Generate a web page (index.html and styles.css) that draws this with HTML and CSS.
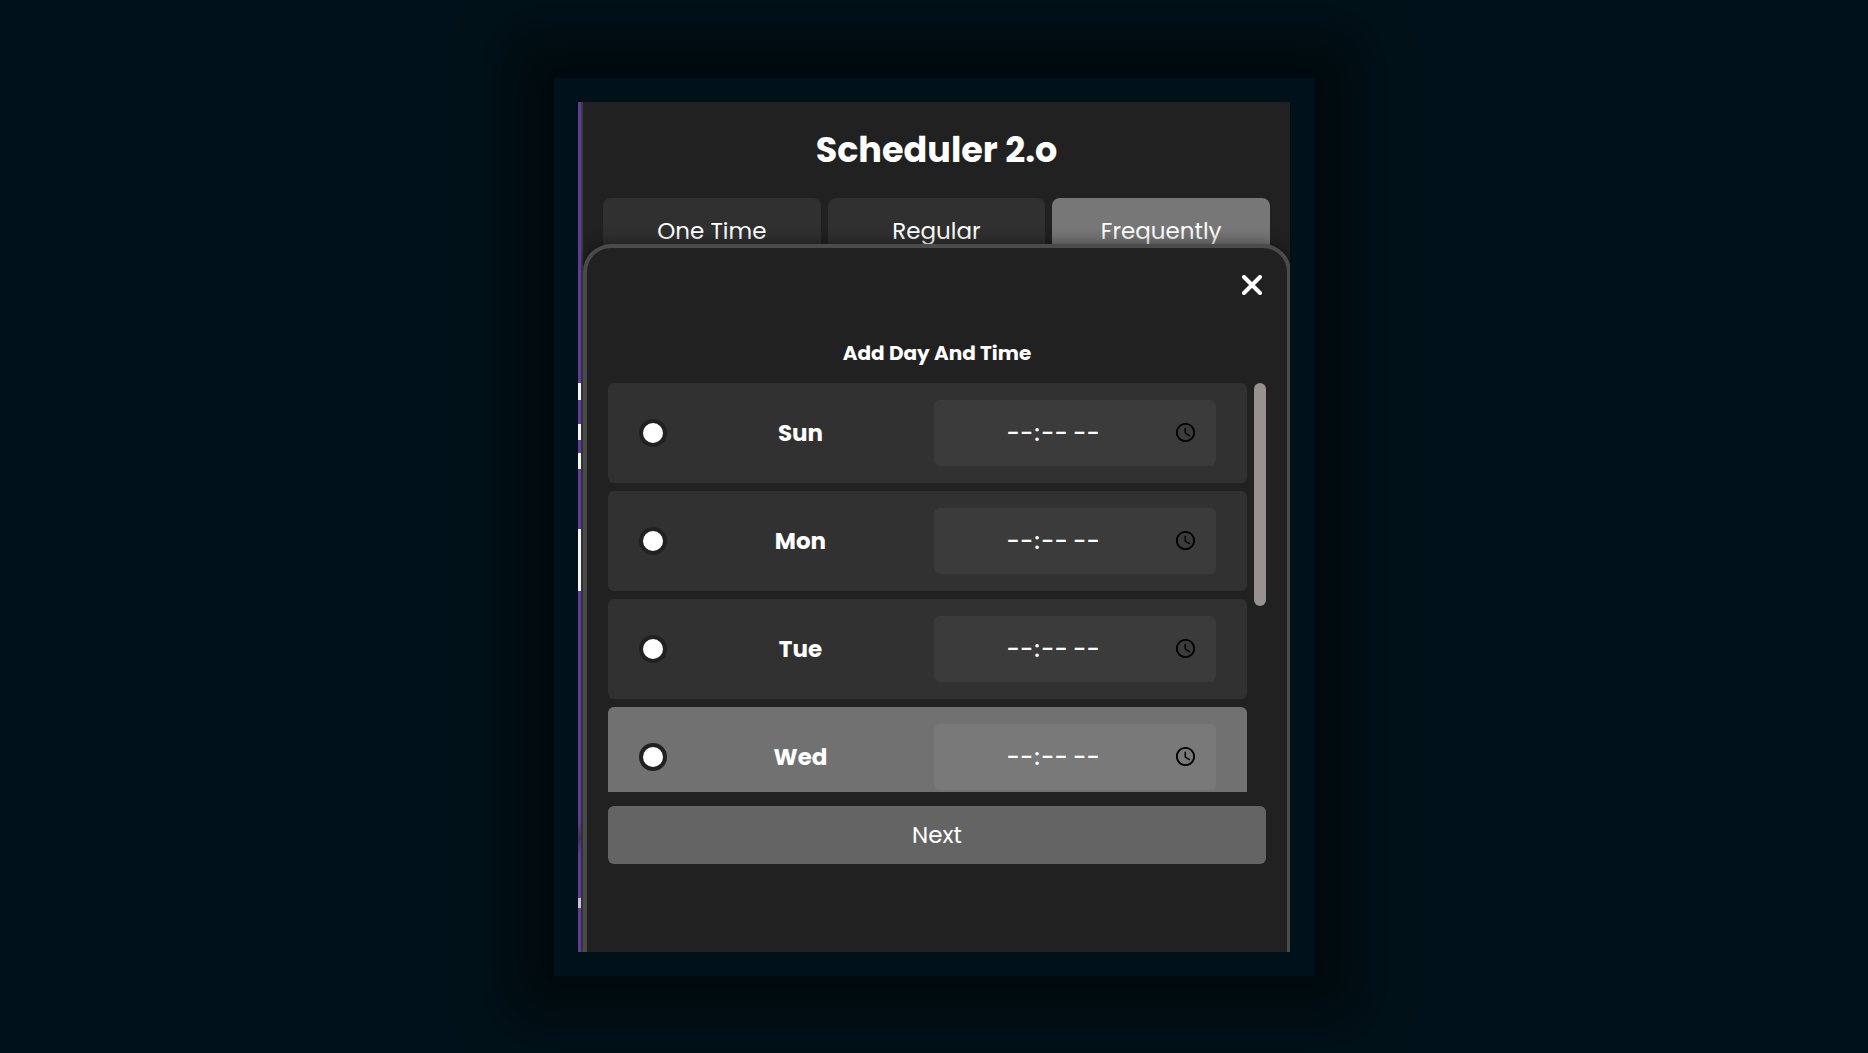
FILE: index.html
```
<!DOCTYPE html>
<html lang="en">
<head>
  <meta charset="UTF-8">
  <meta name="viewport" content="width=device-width, initial-scale=1.0">
  <title>Scheduler 2.o</title>
  <link rel="stylesheet" href="styles.css">
</head>
<body>
  <main class="frame">
    <div class="screen">
      <div class="strip"></div>
      <div class="app">
        <h1 class="app-title">Scheduler 2.o</h1>
        <nav class="tabs">
          <button type="button" class="tab">One Time</button>
          <button type="button" class="tab">Regular</button>
          <button type="button" class="tab active">Frequently</button>
        </nav>

        <!-- bottom sheet -->
        <form class="sheet">
          <button type="button" class="close-btn" aria-label="Close">
            <svg width="20" height="20" viewBox="0 0 20 20" fill="none" stroke="#fff" stroke-width="4" stroke-linecap="round">
              <path d="M2 2L18 18M18 2L2 18"/>
            </svg>
          </button>
          <h2 class="sheet-title">Add Day And Time</h2>
          <div class="days-wrap">
            <div class="days">
              <div class="day">
                <input type="radio" name="day" id="sun" class="day-radio">
                <label for="sun" class="day-name">Sun</label>
                <input type="time" class="day-time" aria-label="Sun time">
              </div>
              <div class="day">
                <input type="radio" name="day" id="mon" class="day-radio">
                <label for="mon" class="day-name">Mon</label>
                <input type="time" class="day-time" aria-label="Mon time">
              </div>
              <div class="day">
                <input type="radio" name="day" id="tue" class="day-radio">
                <label for="tue" class="day-name">Tue</label>
                <input type="time" class="day-time" aria-label="Tue time">
              </div>
              <div class="day highlight">
                <input type="radio" name="day" id="wed" class="day-radio">
                <label for="wed" class="day-name">Wed</label>
                <input type="time" class="day-time" aria-label="Wed time">
              </div>
            </div>
            <div class="scroll-thumb"></div>
          </div>
          <button type="button" class="next-btn">Next</button>
        </form>
      </div>
    </div>
  </main>
</body>
</html>
```
FILE: styles.css
```
* {
  box-sizing: border-box;
  margin: 0;
  padding: 0;
  font-family: Poppins, Inter, sans-serif;
}
body {
  min-height: 100vh;
  background: #001219;
  color: #fff;
  display: flex;
  align-items: center;
  justify-content: center;
  overflow: hidden;
}
.frame {
  width: 100%;
  max-width: 760px;
  padding: 24px;
  background: #001219;
  box-shadow: 0 0 50px 45px rgba(0,0,0,0.45);
}
.screen {
  display: flex;
  overflow: hidden;
}
/* edge of the page behind the app */
.strip {
  position: relative;
  z-index: 1;
  width: 3px;
  background: linear-gradient(#613b98 281px, #f4f7f2 281px 298px, #613b98 298px 322px, #f4f7f2 322px 338px, #613b98 338px 351px, #f4f7f2 351px 367px, #613b98 367px 427px, #f4f7f2 427px 489px, #613b98 489px 720px, #41305f 736px, #613b98 752px 796px, #c9c3d6 796px 806px, #613b98 806px);
}
.app {
  flex: 1;
  min-width: 0;
  background: #212121;
  border-left: 2px solid #3c3c3c;
}
.app-title {
  padding: 24px 0;
  font-size: 35px;
  line-height: 48px;
  font-weight: 700;
  text-align: center;
}
.tabs {
  display: grid;
  grid-template-columns: repeat(3, 1fr);
  gap: 7px;
  padding: 0 20px;
}
.tab {
  height: 66px;
  border: none;
  border-radius: 8px;
  background: #303030;
  color: #fff;
  font-size: 23px;
  cursor: pointer;
}
.tab.active {
  background: #777;
}
.sheet {
  position: relative;
  display: flex;
  flex-direction: column;
  margin: -20px -1px 0 0;
  padding: 16px 21px 88px;
  background: #212121;
  border: 4px solid #4b4b4b;
  border-bottom: none;
  border-radius: 28px 28px 0 0;
  box-shadow: 0 -2px 14px rgba(0,0,0,0.4);
}
.close-btn {
  align-self: flex-end;
  display: flex;
  align-items: center;
  justify-content: center;
  width: 28px;
  height: 42px;
  border: none;
  background: none;
  cursor: pointer;
}
.sheet-title {
  margin-top: 32px;
  padding-bottom: 15px;
  font-size: 20px;
  line-height: 30px;
  font-weight: 700;
  text-align: center;
}
.days-wrap {
  display: flex;
  gap: 7px;
}
.days {
  flex: 1;
  display: flex;
  flex-direction: column;
  gap: 8px;
  height: 409px;
  overflow-y: auto;
  scrollbar-width: none;
}
.scroll-thumb {
  width: 12px;
  height: 223px;
  background: #979191;
  border-radius: 6px;
}
.day {
  flex: none;
  display: grid;
  grid-template-columns: 28px 1fr 282px;
  align-items: center;
  height: 100px;
  padding: 0 31px;
  border-radius: 6px;
  background: #313131;
}
.day.highlight {
  background: #717171;
}
.day-radio {
  appearance: none;
  width: 28px;
  height: 28px;
  border: 4px solid #212121;
  border-radius: 50%;
  background: #fff;
}
.day-name {
  font-size: 23px;
  font-weight: 700;
  text-align: center;
}
.day-time {
  width: 100%;
  height: 66px;
  padding: 0 16px 0 9px;
  border: none;
  border-radius: 6px;
  background: #3b3b3b;
  color: #fff;
  font-size: 23px;
  font-weight: 500;
  text-align: center;
}
.day-time::-webkit-calendar-picker-indicator {
  font-size: 22px;
}
.day.highlight .day-time {
  background: #797979;
}
.next-btn {
  height: 58px;
  margin-top: 14px;
  border: none;
  border-radius: 6px;
  background: #646464;
  color: #fff;
  font-size: 23px;
  cursor: pointer;
}
```
